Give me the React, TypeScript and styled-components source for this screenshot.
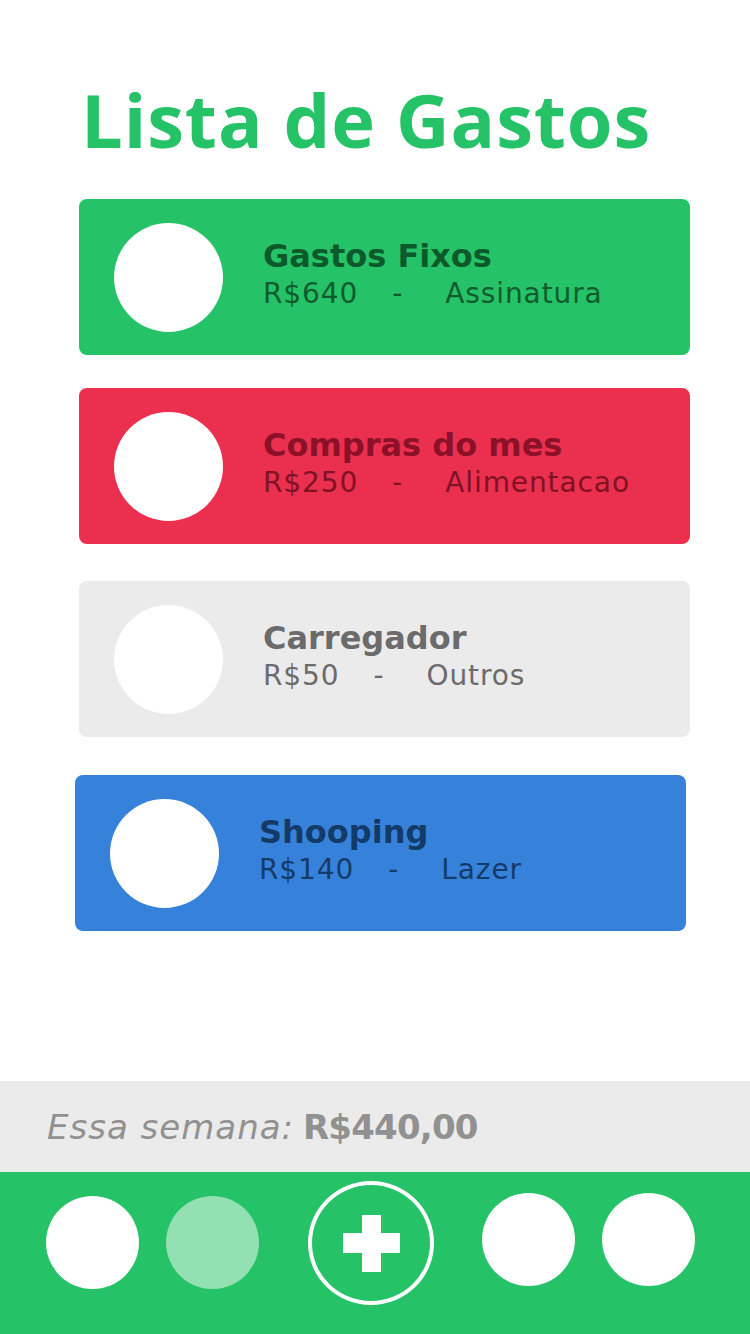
import React from "react";
import styled, { createGlobalStyle } from "styled-components";

const GlobalStyle = createGlobalStyle`
  html, body { margin: 0; padding: 0; background: #ffffff; }
  body { font-family: "DejaVu Sans", "Open Sans", sans-serif; }
  * { box-sizing: border-box; }
`;

const Page = styled.div`
  width: 750px;
  height: 1334px;
  display: flex;
  flex-direction: column;
  background: #ffffff;
  overflow: hidden;
`;

const Title = styled.h1`
  margin: 0;
  padding: 74px 0 0 81px;
  font-family: "Open Sans", "DejaVu Sans", sans-serif;
  font-size: 74px;
  line-height: 92px;
  font-weight: 700;
  color: #26c267;
  letter-spacing: 0.9px;
`;

const List = styled.div`
  display: flex;
  flex-direction: column;
  padding: 0 0 0 79px;
`;

type Tone = "green" | "red" | "gray" | "blue";

const palette: Record<Tone, { bg: string; title: string; sub: string }> = {
  green: { bg: "#26c267", title: "#0c5a2b", sub: "#0f5b2d" },
  red: { bg: "#eb2f4e", title: "#8a1127", sub: "#7f1224" },
  gray: { bg: "#ebebeb", title: "#6b6b6b", sub: "#6b6b6b" },
  blue: { bg: "#3682db", title: "#143a68", sub: "#153b68" },
};

const Card = styled.div<{ $tone: Tone; $top: number; $shift: number }>`
  width: 611px;
  height: 156px;
  margin-top: ${(p) => p.$top}px;
  margin-left: ${(p) => p.$shift}px;
  border-radius: 8px;
  background: ${(p) => palette[p.$tone].bg};
  display: flex;
  align-items: flex-start;
  padding: 24px 0 0 35px;
  gap: 40px;
`;

const Avatar = styled.div`
  width: 109px;
  height: 109px;
  border-radius: 50%;
  background: #ffffff;
  flex-shrink: 0;
`;

const CardText = styled.div<{ $tone: Tone }>`
  display: flex;
  flex-direction: column;
  padding-top: 14px;
  color: ${(p) => palette[p.$tone].sub};
`;

const CardTitle = styled.div<{ $tone: Tone }>`
  font-size: 32px;
  line-height: 38px;
  font-weight: 700;
  color: ${(p) => palette[p.$tone].title};
`;

const CardSub = styled.div`
  display: flex;
  align-items: baseline;
  font-size: 28px;
  line-height: 37px;
  font-weight: 400;
  letter-spacing: 0.9px;
`;

const Dash = styled.span`
  margin: 0 42px 0 34px;
`;

const Spacer = styled.div`
  flex: 1;
`;

const Summary = styled.div`
  height: 91px;
  background: #ebebeb;
  display: flex;
  align-items: center;
  padding: 0 0 0 47px;
  font-size: 34px;
  color: #919191;
`;

const SummaryLabel = styled.span`
  font-style: italic;
  font-weight: 400;
  letter-spacing: 1px;
  margin-right: 9px;
`;

const SummaryValue = styled.span`
  font-weight: 700;
  letter-spacing: -0.8px;
`;

const Nav = styled.nav`
  height: 162px;
  background: #26c267;
  display: flex;
  align-items: flex-start;
  padding-left: 46px;
`;

const NavDot = styled.div<{ $top: number; $gap: number; $faded?: boolean }>`
  width: 93px;
  height: 93px;
  border-radius: 50%;
  margin-top: ${(p) => p.$top}px;
  margin-left: ${(p) => p.$gap}px;
  background: ${(p) => (p.$faded ? "#93e0b2" : "#ffffff")};
  flex-shrink: 0;
`;

const AddButton = styled.button`
  width: 126px;
  height: 124px;
  margin-top: 9px;
  margin-left: 49px;
  border-radius: 50%;
  border: 4px solid #ffffff;
  background: transparent;
  padding: 0;
  display: flex;
  align-items: center;
  justify-content: center;
  flex-shrink: 0;
  cursor: pointer;
`;

const items: { title: string; value: string; cat: string; tone: Tone; top: number; shift: number }[] = [
  { title: "Gastos Fixos", value: "R$640", cat: "Assinatura", tone: "green", top: 33, shift: 0 },
  { title: "Compras do mes", value: "R$250", cat: "Alimentacao", tone: "red", top: 33, shift: 0 },
  { title: "Carregador", value: "R$50", cat: "Outros", tone: "gray", top: 37, shift: 0 },
  { title: "Shooping", value: "R$140", cat: "Lazer", tone: "blue", top: 38, shift: -4 },
];

export default function App() {
  return (
    <>
      <GlobalStyle />
      <Page>
        <Title>Lista de Gastos</Title>
        <List>
          {items.map((it) => (
            <Card key={it.title} $tone={it.tone} $top={it.top} $shift={it.shift}>
              <Avatar />
              <CardText $tone={it.tone}>
                <CardTitle $tone={it.tone}>{it.title}</CardTitle>
                <CardSub>
                  <span>{it.value}</span>
                  <Dash>-</Dash>
                  <span>{it.cat}</span>
                </CardSub>
              </CardText>
            </Card>
          ))}
        </List>
        <Spacer />
        <Summary>
          <SummaryLabel>Essa semana:</SummaryLabel>
          <SummaryValue>R$440,00</SummaryValue>
        </Summary>
        <Nav>
          <NavDot $top={24} $gap={0} />
          <NavDot $top={24} $gap={27} $faded />
          <AddButton aria-label="Adicionar">
            <svg width="57" height="57" viewBox="0 0 57 57">
              <rect x="19" y="0" width="19" height="57" fill="#ffffff" />
              <rect x="0" y="18" width="57" height="20" fill="#ffffff" />
            </svg>
          </AddButton>
          <NavDot $top={21} $gap={48} />
          <NavDot $top={21} $gap={27} />
        </Nav>
      </Page>
    </>
  );
}
